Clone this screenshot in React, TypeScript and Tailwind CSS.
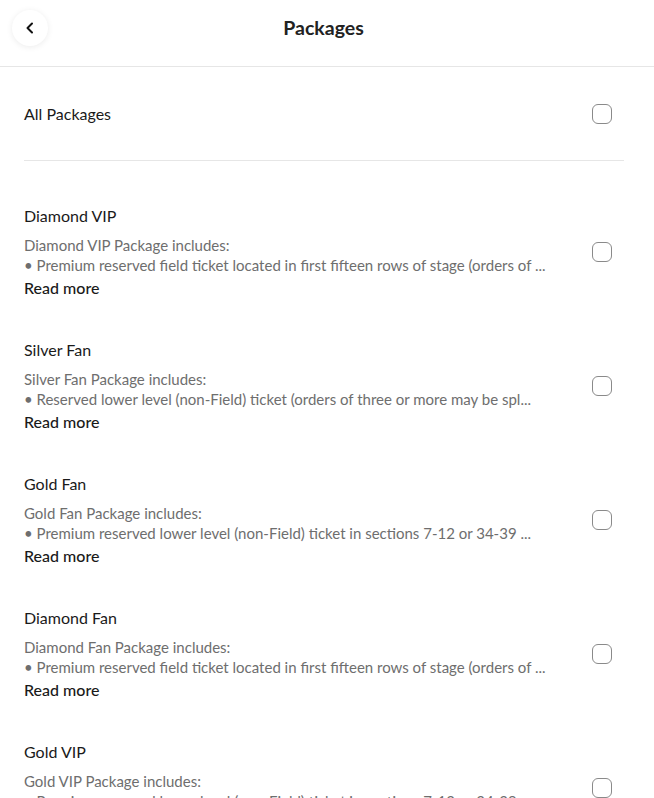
import React from "react";

const items = [
  {
    title: "Diamond VIP",
    l1: "Diamond VIP Package includes:",
    l2: "• Premium reserved field ticket located in first fifteen rows of stage (orders of ...",
  },
  {
    title: "Silver Fan",
    l1: "Silver Fan Package includes:",
    l2: "• Reserved lower level (non-Field) ticket (orders of three or more may be spl...",
  },
  {
    title: "Gold Fan",
    l1: "Gold Fan Package includes:",
    l2: "• Premium reserved lower level (non-Field) ticket in sections 7-12 or 34-39 ...",
  },
  {
    title: "Diamond Fan",
    l1: "Diamond Fan Package includes:",
    l2: "• Premium reserved field ticket located in first fifteen rows of stage (orders of ...",
  },
  {
    title: "Gold VIP",
    l1: "Gold VIP Package includes:",
    l2: "• Premium reserved lower level (non-Field) ticket in sections 7-12 or 34-39 ...",
  },
];

function Checkbox() {
  return <div className="w-5 h-5 rounded-[6px] border border-[#8a8a8a] bg-white shrink-0" />;
}

export default function App() {
  return (
    <div className="w-full bg-white text-[#1a1a1a]" style={{ fontFamily: "Lato, 'Liberation Sans', sans-serif" }}>
      <header className="relative h-[67px] border-b border-[#e6e6e6] flex items-center justify-center pr-[7px]">
        <button className="absolute left-3 top-[10px] w-9 h-9 rounded-full bg-white shadow-[0_1px_6px_rgba(0,0,0,0.08)] flex items-center justify-center">
          <svg width="14" height="14" viewBox="0 0 14 14" fill="none">
            <path d="M9 2.5L4.5 7L9 11.5" stroke="#111" strokeWidth="2" strokeLinecap="round" strokeLinejoin="round" />
          </svg>
        </button>
        <h1 className="text-[19.5px] font-bold text-[#222] -mt-[10px]">Packages</h1>
      </header>
      <main className="pl-6 pr-[30px]">
        <div className="h-[94px] flex items-center justify-between border-b border-[#e6e6e6] pr-3">
          <span className="text-[16px]">All Packages</span>
          <Checkbox />
        </div>
        <div className="pt-6">
          {items.map((it) => (
            <div key={it.title} className="py-[19px] flex items-center justify-between pr-3">
              <div className="min-w-0 flex-1 pr-[40px]">
                <div className="text-[16px] leading-6">{it.title}</div>
                <div className="mt-[7px] text-[15px] leading-5 text-[#6e6e6e] whitespace-nowrap overflow-hidden">
                  <div>{it.l1}</div>
                  <div>{it.l2}</div>
                </div>
                <div className="text-[16px] leading-6 mt-[1px] font-medium">Read more</div>
              </div>
              <Checkbox />
            </div>
          ))}
        </div>
      </main>
    </div>
  );
}
